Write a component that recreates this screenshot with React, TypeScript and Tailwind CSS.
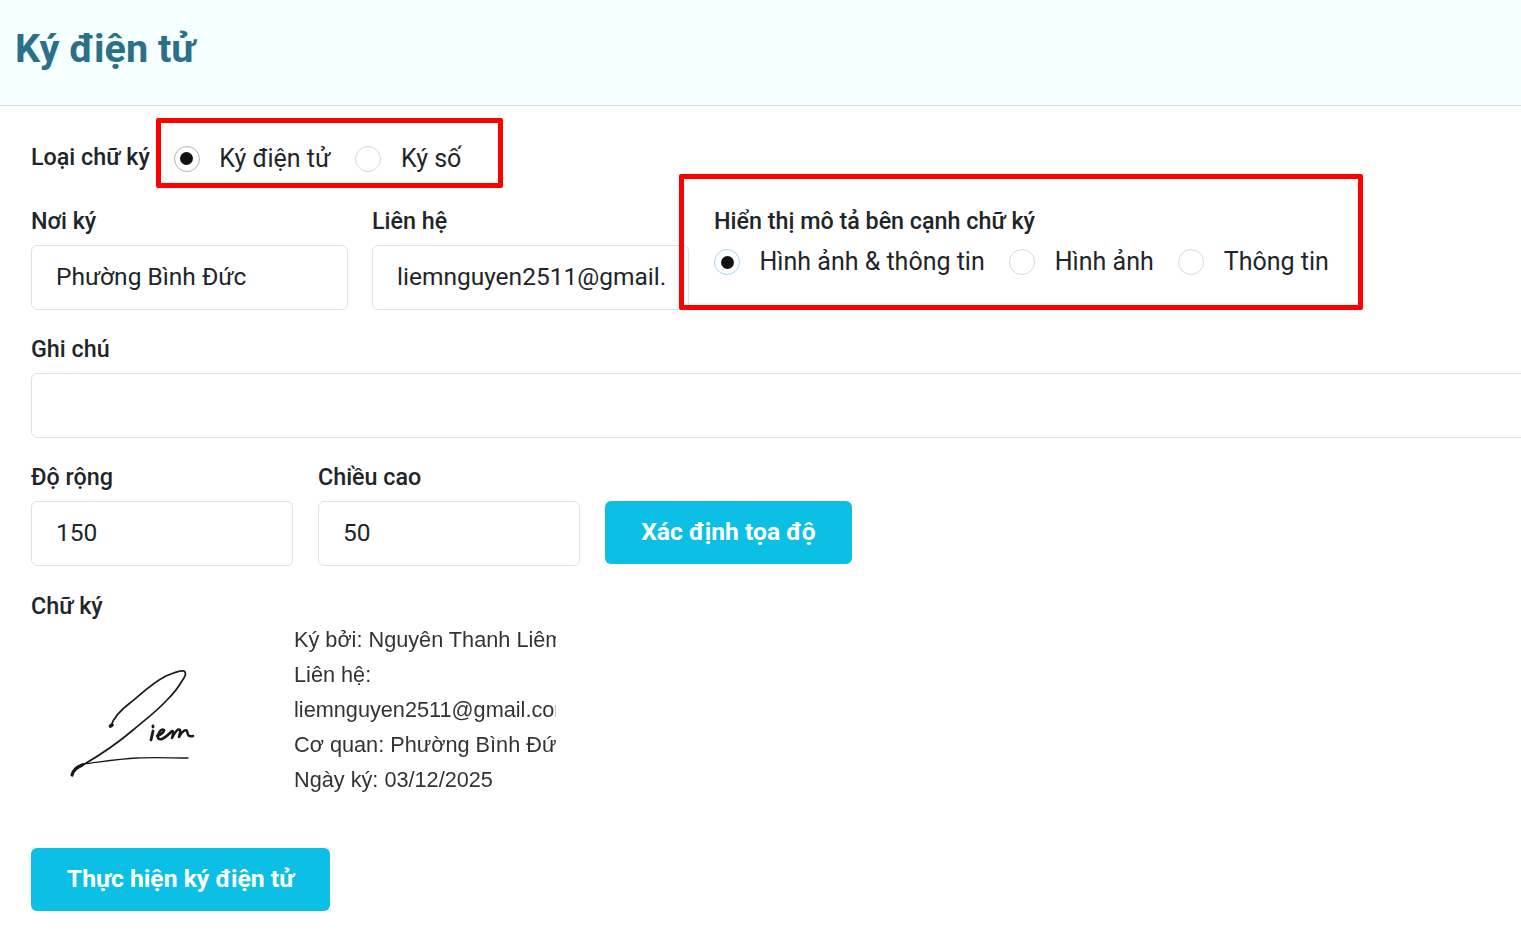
const font = { fontFamily: "Roboto, 'Noto Sans', sans-serif" };

function Radio({ checked, focus, label, gap = "mr-[24.5px]" }: { checked?: boolean; focus?: boolean; label: string; gap?: string }) {
  return (
    <div className={`flex items-center ${gap}`}>
      <span className={`flex h-[26px] w-[26px] items-center justify-center rounded-full border bg-white ${focus ? "border-[#a9d8e8]" : checked ? "border-[#b5b5b5]" : "border-[#d9d9d9]"}`}>
        {checked && <span className="h-[13px] w-[13px] rounded-full bg-[#111]" />}
      </span>
      <span className="ml-[19.5px] text-[25px] leading-[30px] text-[#212529]">{label}</span>
    </div>
  );
}

function Label({ children, className = "" }: { children: React.ReactNode; className?: string }) {
  return <div className={`text-[23.3px] font-medium leading-[30px] text-[#212529] ${className}`}>{children}</div>;
}

function Field({ value, className = "" }: { value?: string; className?: string }) {
  return (
    <div className={`flex h-[65px] items-center overflow-hidden whitespace-nowrap rounded-[6px] border border-[#dee2e6] bg-white pl-[24px] pr-[22px] text-[24.5px] text-[#212529] ${className}`}>
      <span className="overflow-hidden">{value}</span>
    </div>
  );
}

function Btn({ children, className = "" }: { children: React.ReactNode; className?: string }) {
  return (
    <div className={`flex h-[63px] items-center justify-center rounded-[6px] bg-[#0bc0e4] text-[24.7px] font-bold text-white ${className}`}>
      <span className="-mt-[1px]">{children}</span>
    </div>
  );
}

export default function App() {
  return (
    <div className="relative h-[937px] w-[1521px] overflow-hidden bg-white" style={font}>
      <header className="flex h-[106px] items-center border-b border-[#d8dde0] bg-[#f6ffff] pb-[8px] pl-[15px]">
        <h1 className="text-[39.6px] font-bold leading-[48px] text-[#2a7088]">Ký điện tử</h1>
      </header>

      <main className="pl-[31px]">
        <div className="flex h-[103px] items-center pt-[2px]">
          <Label className="-mt-[4px] mr-[24px]">Loại chữ ký</Label>
          <Radio checked label="Ký điện tử" gap="mr-[25px]" />
          <Radio label="Ký số" />
        </div>

        <div className="flex items-start">
          <div className="w-[317px]">
            <Label className="mb-[9px] -mt-[3px]">Nơi ký</Label>
            <Field value="Phường Bình Đức" />
          </div>
          <div className="ml-[24px] w-[317px]">
            <Label className="mb-[9px] -mt-[3px]">Liên hệ</Label>
            <Field value="liemnguyen2511@gmail.com" />
          </div>
          <div className="ml-[25px]">
            <Label className="mb-[11px] -mt-[3px]">Hiển thị mô tả bên cạnh chữ ký</Label>
            <div className="flex items-center">
              <Radio checked focus label="Hình ảnh &amp; thông tin" />
              <Radio label="Hình ảnh" />
              <Radio label="Thông tin" />
            </div>
          </div>
        </div>

        <Label className="mb-[9px] mt-[24px]">Ghi chú</Label>
        <Field className="w-[1600px]" />

        <div className="mt-[24px] flex items-start">
          <div className="w-[262px]">
            <Label className="mb-[9px]">Độ rộng</Label>
            <Field value="150" />
          </div>
          <div className="ml-[25px] w-[262px]">
            <Label className="mb-[9px]">Chiều cao</Label>
            <Field value="50" />
          </div>
          <Btn className="ml-[25px] mt-[39px] w-[247px]">Xác định tọa độ</Btn>
        </div>

        <Label className="mb-[1px] mt-[25px]">Chữ ký</Label>

        <div className="flex h-[226px] items-start">
          <svg className="-mt-[2px] w-[263px] shrink-0 blur-[0.4px]" width="263" height="175" viewBox="31 620 263 175" fill="none" stroke="#1a1a1a" strokeLinecap="round" strokeLinejoin="round">
            <path d="M111 726 C114 716 122 709 130 703 C140 695 152 683 166 676 C173 673 180 670 184 671 C187 673 185 677 182 681 C178 688 172 695 167 700 C157 711 145 720 133 730 C118 743 100 755 83 765 L75 770" strokeWidth="1.7" />
            <path d="M110.5 726 l1.5 -1" strokeWidth="3.6" />
            <path d="M83 764 C100 762 118 759 137 758 C155 757 172 758 188 758" strokeWidth="1.3" />
            <path d="M72 775 C73 771 77 767 82 765" strokeWidth="3.2" />
            <path d="M153 726 l0 1" strokeWidth="2.8" />
            <path d="M153 731 L151 740" strokeWidth="2.8" />
            <path d="M157 736 C161 735 165 731 164 730 C161 728 157 734 158 738 C160 741 165 738 170 733" strokeWidth="2.5" />
            <path d="M170 733 C173 729 174 731 172 738 C175 732 178 728 180 730 C181 732 179 735 179 737 C182 731 186 729 187 731 C188 734 187 737 193 736" strokeWidth="2.5" />
          </svg>
          <div className="w-[262px] overflow-hidden whitespace-nowrap text-[21.7px] leading-[35px] text-[#333] blur-[0.5px]" style={{ fontFamily: "'Liberation Sans', Arial, sans-serif" }}>
            <div>Ký bởi: Nguyên Thanh Liêm</div>
            <div>Liên hệ:</div>
            <div>liemnguyen2511@gmail.com</div>
            <div>Cơ quan: Phường Bình Đức</div>
            <div>Ngày ký: 03/12/2025</div>
          </div>
        </div>

        <Btn className="w-[299px]">Thực hiện ký điện tử</Btn>
      </main>

      <div className="absolute left-[156px] top-[118px] h-[70px] w-[347px] rounded-[2px] border-[5px] border-[#ff0000]" />
      <div className="absolute left-[679px] top-[174px] h-[136px] w-[684px] rounded-[2px] border-[5px] border-[#ff0000]" />
    </div>
  );
}
